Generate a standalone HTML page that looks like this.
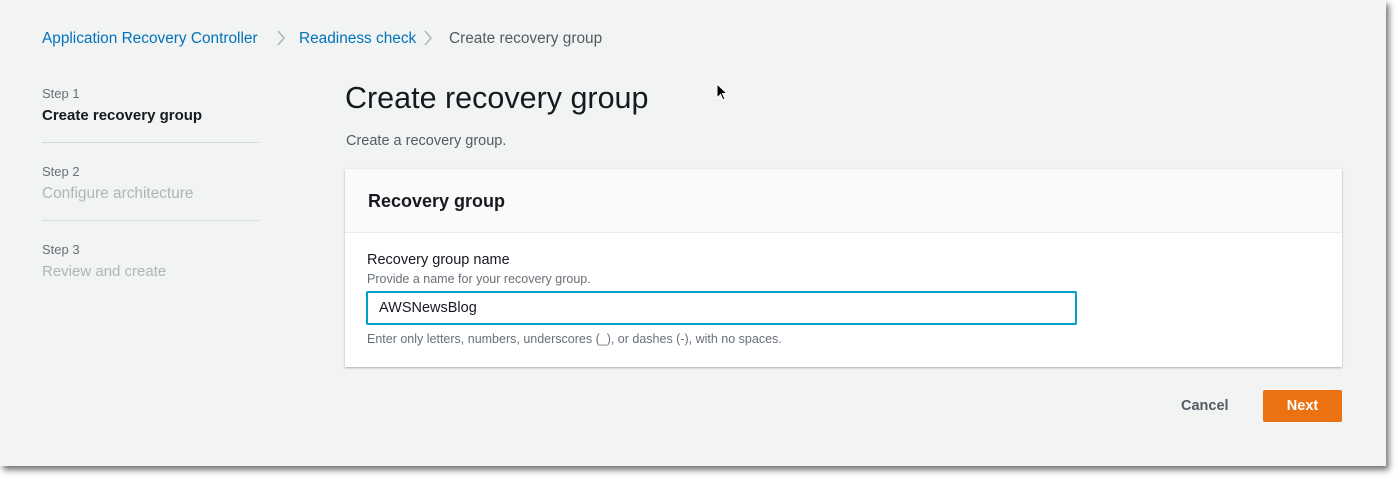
<!DOCTYPE html>
<html><head><style>
body{margin:0;width:1400px;height:485px;background:#fff;font-family:"Liberation Sans",sans-serif;position:relative;overflow:hidden}
.pg{position:absolute;left:0;top:0;width:1386px;height:466px;background:#f2f3f3;box-shadow:3px 4px 6px rgba(0,0,0,.55)}
.a{position:absolute;white-space:nowrap}
.bc{top:30px;font-size:15.4px;color:#0073bb}
.sep{top:29px}
.sl{font-size:13px;color:#687078}
.hr{position:absolute;left:42px;width:217px;height:1px;background:#d5dbdb}
.panel{position:absolute;left:345px;top:169px;width:997px;height:198px;background:#fff;box-shadow:0 1px 2px rgba(0,28,36,.3)}
</style></head><body>
<div class="pg">
<div class="a bc" style="left:42px">Application Recovery Controller</div>
<svg class="a sep" style="left:276px" width="10" height="18" viewBox="0 0 10 18"><path d="M2 2 L8 9 L2 16" fill="none" stroke="#aab7b8" stroke-width="1.5"/></svg>
<div class="a bc" style="left:299px">Readiness check</div>
<svg class="a sep" style="left:423px" width="10" height="18" viewBox="0 0 10 18"><path d="M2 2 L8 9 L2 16" fill="none" stroke="#aab7b8" stroke-width="1.5"/></svg>
<div class="a bc" style="left:449px;color:#545b64">Create recovery group</div>

<div class="a sl" style="left:42px;top:86px">Step 1</div>
<div class="a" style="left:42px;top:107px;font-size:15px;font-weight:bold;color:#16191f">Create recovery group</div>
<div class="hr" style="top:142px"></div>
<div class="a sl" style="left:42px;top:164px">Step 2</div>
<div class="a" style="left:42px;top:185px;font-size:15.4px;color:#aab7b8">Configure architecture</div>
<div class="hr" style="top:220px"></div>
<div class="a sl" style="left:42px;top:242px">Step 3</div>
<div class="a" style="left:42px;top:263px;font-size:15px;color:#aab7b8">Review and create</div>

<div class="a" style="left:345px;top:81px;font-size:30.5px;color:#16191f">Create recovery group</div>
<div class="a" style="left:346px;top:133px;font-size:14.5px;color:#545b64">Create a recovery group.</div>

<div class="panel">
<div style="height:63px;background:#fafafa;border-bottom:1px solid #eaeded"></div>
<div class="a" style="left:23px;top:22px;font-size:18px;font-weight:bold;color:#16191f">Recovery group</div>
<div class="a" style="left:22px;top:83px;font-size:14.5px;color:#16191f">Recovery group name</div>
<div class="a" style="left:22px;top:103px;font-size:12.5px;color:#687078">Provide a name for your recovery group.</div>
<div class="a" style="left:21px;top:122px;width:707px;height:30px;border:2px solid #00a1c9;border-radius:2px;box-sizing:content-box"></div>
<div class="a" style="left:34px;top:131px;font-size:14.5px;color:#16191f">AWSNewsBlog</div>
<div class="a" style="left:22px;top:163px;font-size:12.5px;color:#687078">Enter only letters, numbers, underscores (_), or dashes (-), with no spaces.</div>
</div>

<div class="a" style="left:1181px;top:398px;font-size:14.5px;font-weight:bold;color:#545b64">Cancel</div>
<div class="a" style="left:1263px;top:390px;width:79px;height:32px;background:#ec7211;border-radius:2px;color:#fff;font-size:14.5px;font-weight:bold;text-align:center;line-height:32px">Next</div>
<svg class="a" style="left:716px;top:83px" width="12" height="20" viewBox="0 0 12 20"><path d="M1 1 L1 15 L4.5 11.5 L7 17 L9 16 L6.5 10.5 L11 10.5 Z" fill="#000" stroke="#fff" stroke-width="1"/></svg>
</div>
</body></html>
